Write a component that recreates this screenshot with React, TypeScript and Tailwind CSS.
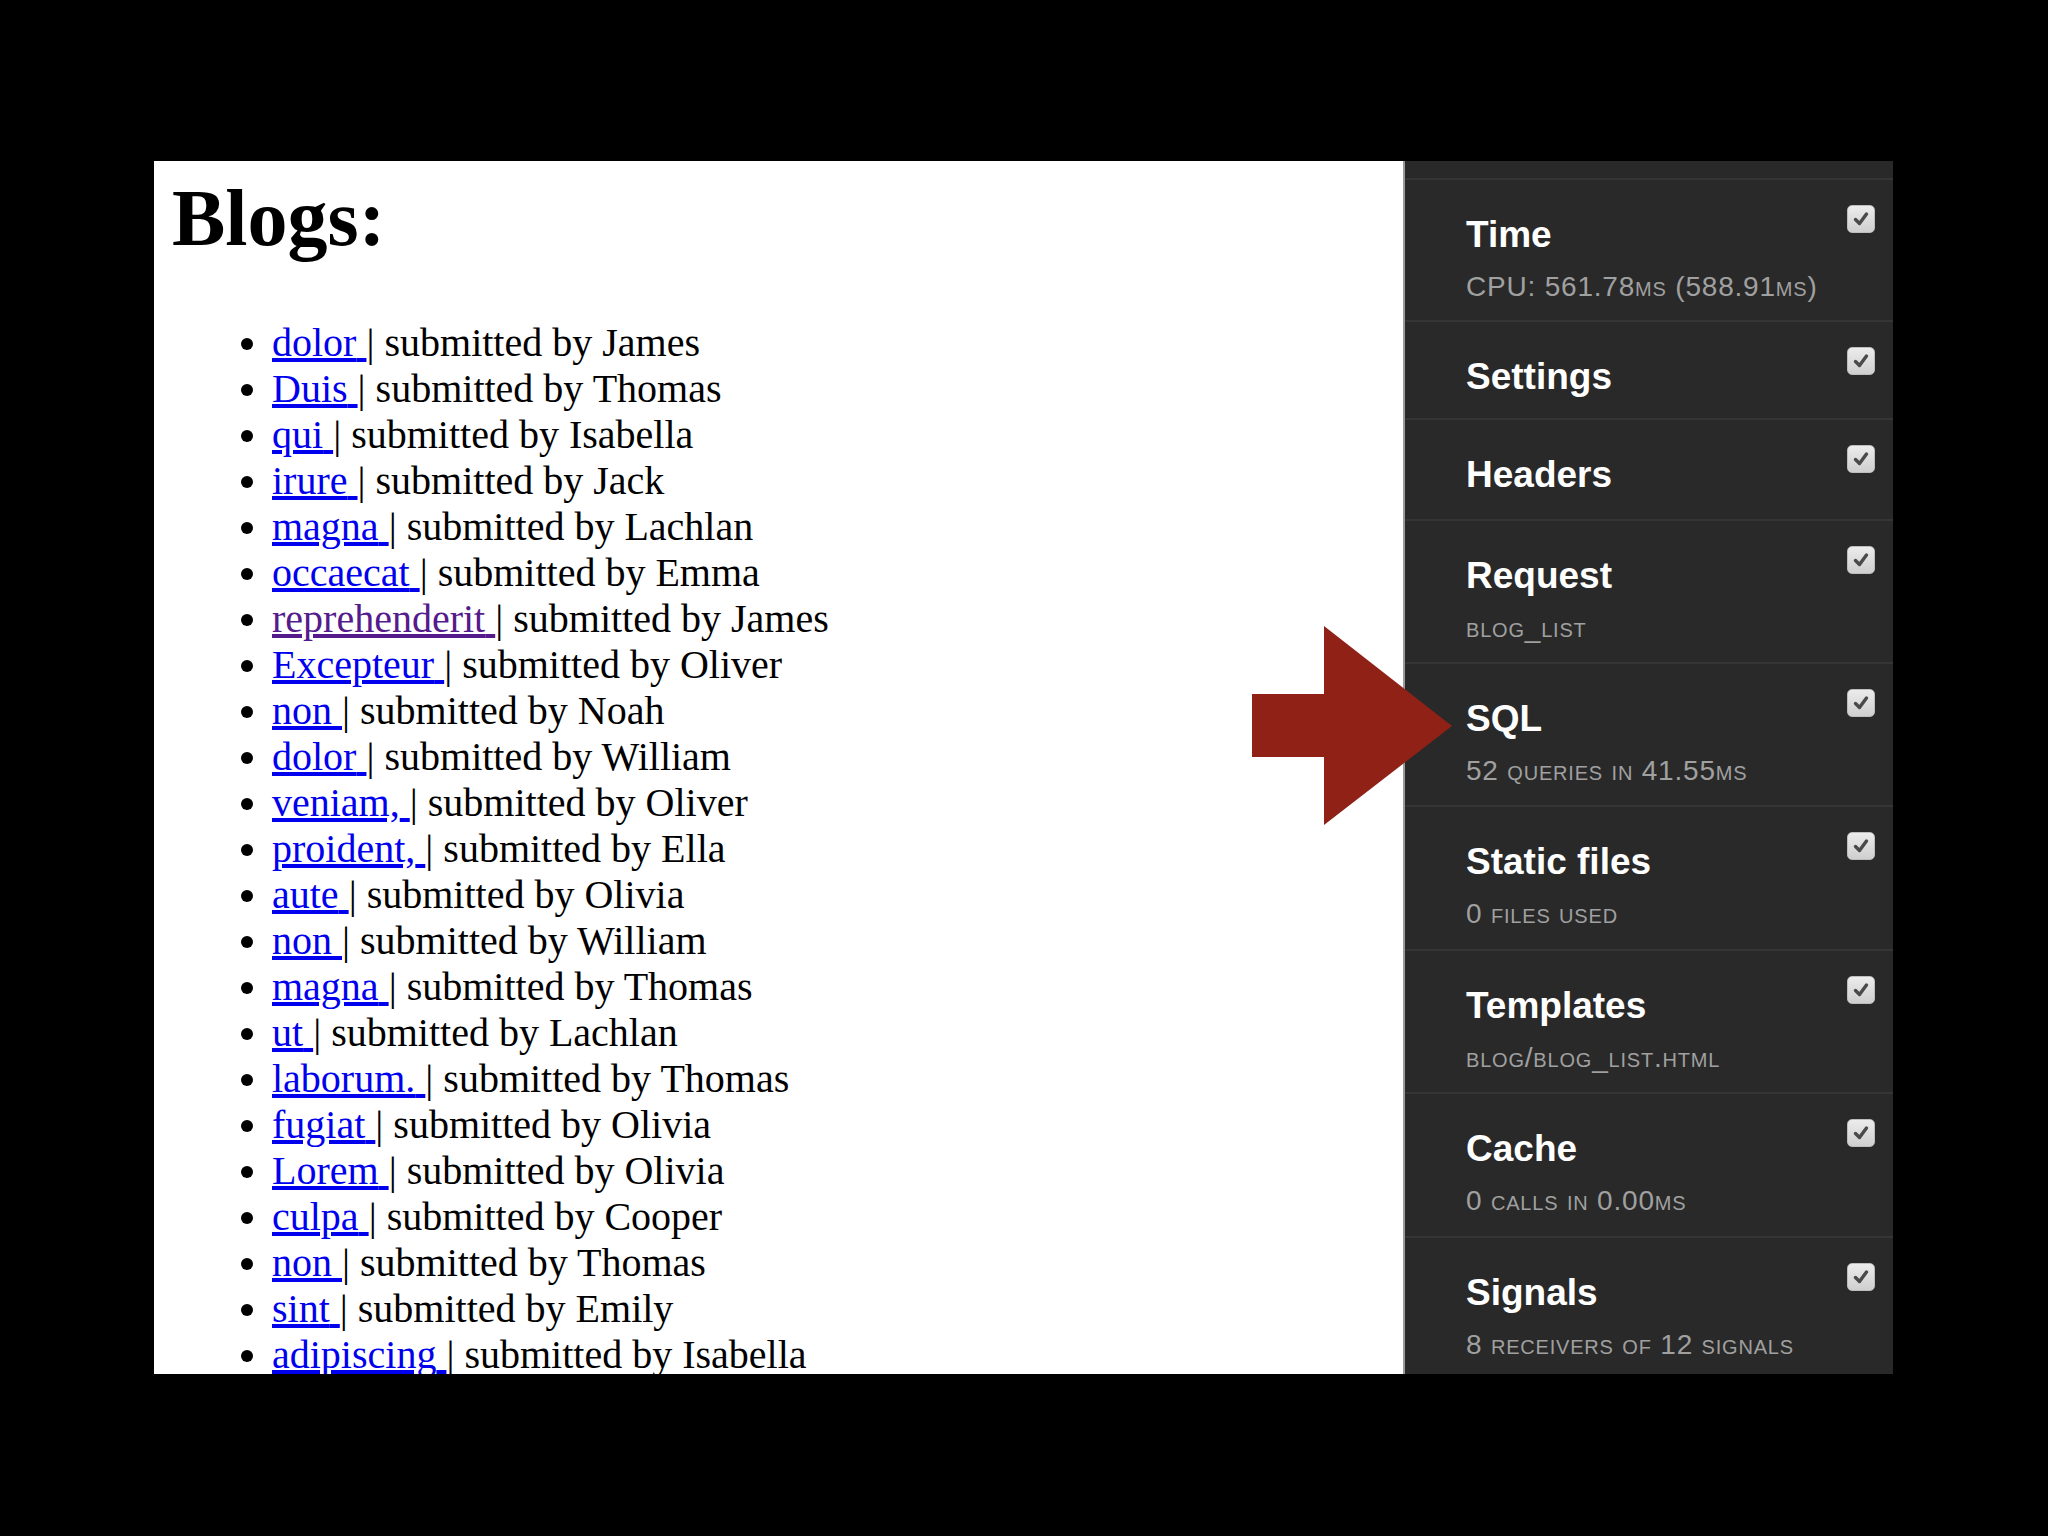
const blogs: { title: string; author: string; visited?: boolean }[] = [
  { title: "dolor", author: "James" },
  { title: "Duis", author: "Thomas" },
  { title: "qui", author: "Isabella" },
  { title: "irure", author: "Jack" },
  { title: "magna", author: "Lachlan" },
  { title: "occaecat", author: "Emma" },
  { title: "reprehenderit", author: "James", visited: true },
  { title: "Excepteur", author: "Oliver" },
  { title: "non", author: "Noah" },
  { title: "dolor", author: "William" },
  { title: "veniam,", author: "Oliver" },
  { title: "proident,", author: "Ella" },
  { title: "aute", author: "Olivia" },
  { title: "non", author: "William" },
  { title: "magna", author: "Thomas" },
  { title: "ut", author: "Lachlan" },
  { title: "laborum.", author: "Thomas" },
  { title: "fugiat", author: "Olivia" },
  { title: "Lorem", author: "Olivia" },
  { title: "culpa", author: "Cooper" },
  { title: "non", author: "Thomas" },
  { title: "sint", author: "Emily" },
  { title: "adipiscing", author: "Isabella" },
]

// panels of the debug toolbar, heights include the 2px top border
const panels: { title: string; sub?: string; height: string }[] = [
  { title: "Time", sub: "CPU: 561.78ms (588.91ms)", height: "h-[142px]" },
  { title: "Settings", height: "h-[98px]" },
  { title: "Headers", height: "h-[101px]" },
  { title: "Request", sub: "blog_list", height: "h-[143px]" },
  { title: "SQL", sub: "52 queries in 41.55ms", height: "h-[143px]" },
  { title: "Static files", sub: "0 files used", height: "h-[144px]" },
  { title: "Templates", sub: "blog/blog_list.html", height: "h-[143px]" },
  { title: "Cache", sub: "0 calls in 0.00ms", height: "h-[144px]" },
  { title: "Signals", sub: "8 receivers of 12 signals", height: "flex-1" },
]

function Checkbox() {
  return (
    <div className="w-[28px] h-[28px] shrink-0 rounded-[5px] bg-gradient-to-b from-[#ececec] to-[#cfcfcf] border border-[#bdbdbd] flex items-center justify-center">
      <svg width="20" height="20" viewBox="0 0 20 20" fill="none">
        <path
          d="M4.5 10.5 L8.5 14.5 L15.5 5"
          stroke="#4a4a4a"
          strokeWidth="3.4"
          strokeLinecap="round"
          strokeLinejoin="round"
        />
      </svg>
    </div>
  )
}

export default function App() {
  return (
    <div className="relative w-[2048px] h-[1536px] bg-black overflow-hidden">
      <div className="flex pt-[161px] pl-[154px] h-[1374px]">
        {/* page content */}
        <div className="w-[1249px] h-full bg-white overflow-hidden pt-[17px] pl-[18px] font-['Liberation_Serif','Times_New_Roman',serif] text-black">
          <h1 className="text-[80px] leading-[80px] font-bold">Blogs:</h1>
          <ul className="mt-[62px] list-disc pl-[100px] text-[40px] leading-[46px]">
            {blogs.map((b, i) => (
              <li key={i}>
                <a
                  href="#"
                  className={`underline ${
                    b.visited ? "text-[#551a8b]" : "text-[#0000ee]"
                  }`}
                >
                  {b.title}{" "}
                </a>
                | submitted by {b.author}
              </li>
            ))}
          </ul>
        </div>

        {/* debug toolbar */}
        <div className="w-[490px] h-full bg-[#292929] border-l-2 border-[#9a9a9a] flex flex-col font-['Liberation_Sans',Arial,sans-serif]">
          <div className="h-[17px] shrink-0" />
          {panels.map((p) => (
            <div
              key={p.title}
              className={`${p.height} shrink-0 border-t-2 border-[#353535] flex justify-between items-start pt-[25px] pl-[61px] pr-[18px]`}
            >
              <div className="mt-[11px]">
                <div className="text-[37px] leading-[37px] font-bold text-white">
                  {p.title}
                </div>
                {p.sub && (
                  <div className="mt-[20px] text-[28px] leading-[28px] tracking-[0.8px] text-[#a0a0a0] [font-variant:small-caps]">
                    {p.sub}
                  </div>
                )}
              </div>
              <Checkbox />
            </div>
          ))}
        </div>
      </div>

      {/* red arrow pointing at SQL panel */}
      <svg
        className="absolute left-[1252px] top-[626px]"
        width="200"
        height="199"
        viewBox="0 0 200 199"
      >
        <polygon
          points="0,68 72,68 72,0 200,100 72,199 72,131 0,131"
          fill="#8f2117"
        />
      </svg>
    </div>
  )
}
